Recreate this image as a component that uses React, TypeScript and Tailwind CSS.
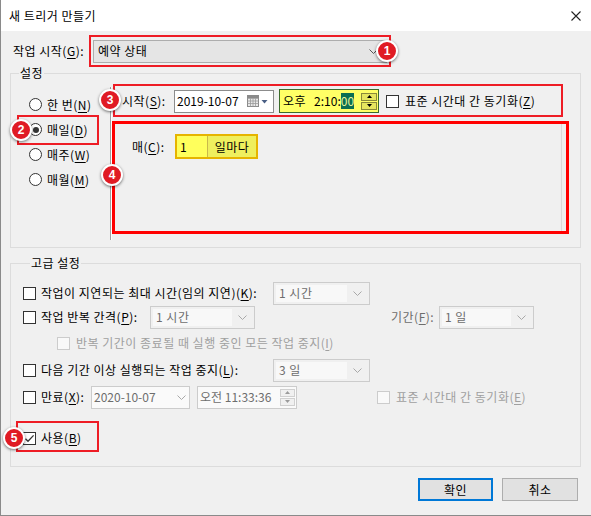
import React from "react";

function U({ children }: { children: React.ReactNode }) {
  return <span className="underline underline-offset-[2px] decoration-[1px]">{children}</span>;
}

function Check({ checked, disabled }: { checked?: boolean; disabled?: boolean }) {
  return (
    <span
      className={
        disabled
          ? "w-[13px] h-[13px] shrink-0 border border-[#cccccc] bg-[#f9f9f9] flex items-center justify-center"
          : "w-[13px] h-[13px] shrink-0 border border-[#333333] bg-white flex items-center justify-center"
      }
    >
      {checked && (
        <svg width="11" height="11" viewBox="0 0 11 11">
          <path d="M1.5 5.8 L4 8.3 L9.6 2.4" fill="none" stroke="#333333" strokeWidth="1.3" />
        </svg>
      )}
    </span>
  );
}

function Radio({ checked }: { checked?: boolean }) {
  return (
    <span className="w-[13px] h-[13px] shrink-0 rounded-full border border-[#333333] bg-white flex items-center justify-center">
      {checked && <span className="w-[6px] h-[6px] rounded-full bg-[#333333]" />}
    </span>
  );
}

function Chevron({ color }: { color: string }) {
  return (
    <svg width="9" height="5" viewBox="0 0 9 5">
      <path d="M0.5 0.5 L4.5 4.5 L8.5 0.5" fill="none" stroke={color} strokeWidth="1" />
    </svg>
  );
}

function Drop({ text, className }: { text: string; className: string }) {
  return (
    <div className={`h-[23px] border border-[#cccccc] bg-[#f0f0f0] flex items-center p-[2px] shrink-0 ${className}`}>
      <div className="flex-1 h-full bg-[#f8f8f8] flex items-center pl-[3px] text-[#6d6d6d]">{text}</div>
      <div className="w-[20px] h-full flex items-center justify-center">
        <Chevron color="#a8a8a8" />
      </div>
    </div>
  );
}

function Badge({ n, className }: { n: string; className: string }) {
  return (
    <div
      className={`absolute w-[22px] h-[22px] rounded-full bg-[#e01b24] border-2 border-white shadow-[0_1px_3px_rgba(0,0,0,0.55)] flex items-center justify-center text-white text-[12px] font-bold font-['Liberation_Sans',sans-serif] leading-none tracking-normal ${className}`}
    >
      {n}
    </div>
  );
}

export default function App() {
  return (
    <div className="relative w-[591px] h-[516px] overflow-hidden bg-[#f0f0f0] border-l border-b border-[#8a8a8a] text-[12px] leading-[16px] tracking-[0.5px] text-black font-['Noto_Sans_CJK_KR','Noto_Sans',sans-serif]">
      {/* Title bar */}
      <div className="h-[31px] bg-white flex items-center justify-between pl-[8px] pr-[10px]">
        <span>새 트리거 만들기</span>
        <svg width="10" height="10" viewBox="0 0 10 10">
          <path d="M0.5 0.5 L9.5 9.5 M9.5 0.5 L0.5 9.5" stroke="#222" strokeWidth="1.1" />
        </svg>
      </div>

      {/* Row 1 */}
      <div className="h-[32px] mt-[4px] flex items-center">
        <div className="w-[88px] pl-[12px]">
          작업 시작(<U>G</U>):
        </div>
        <div className="w-[301px] h-[32px] flex items-center pl-[4px] pr-[3px]">
          <div className="w-full h-[23px] bg-[#e5e5e5] border border-[#adadad] flex items-center justify-between pl-[4px] pr-[8px]">
            <span>예약 상태</span>
            <Chevron color="#555555" />
          </div>
        </div>
      </div>

      {/* 설정 */}
      <fieldset className="ml-[9px] w-[571px] border border-[#dcdcdc] pb-[7px]">
        <legend className="ml-[8px] px-[1px] leading-[12px]">설정</legend>
        <div className="flex">
          <div className="w-[99px] pt-[13px] pl-[18px] flex flex-col">
            <div className="h-[25px] flex items-center gap-[5px]">
              <Radio />
              <span>
                한 번(<U>N</U>)
              </span>
            </div>
            <div className="h-[25px] flex items-center gap-[5px]">
              <Radio checked />
              <span>
                매일(<U>D</U>)
              </span>
            </div>
            <div className="h-[25px] flex items-center gap-[5px]">
              <Radio />
              <span>
                매주(<U>W</U>)
              </span>
            </div>
            <div className="h-[25px] flex items-center gap-[5px]">
              <Radio />
              <span>
                매월(<U>M</U>)
              </span>
            </div>
          </div>
          <div className="mt-[8px] h-[153px] w-[2px] border-l border-[#a0a0a0] border-r border-r-white" />
          <div className="flex flex-col pt-[9px]">
            <div className="h-[26px] flex items-center pl-[10px]">
              <span className="w-[52px]">
                시작(<U>S</U>):
              </span>
              <div className="w-[100px] h-[23px] bg-white border border-[#8c8c8c] flex items-center justify-between pl-[2px] pr-[5px]">
                <span className="tracking-normal">2019-10-07</span>
                <svg width="21" height="12" viewBox="0 0 21 12">
                  <rect x="0.5" y="0.5" width="11" height="11" fill="#e8e8e8" stroke="#8a8a8a" />
                  <path d="M0.5 3.5 H11.5 M0.5 6 H11.5 M0.5 8.5 H11.5 M3.5 3.5 V11.5 M6 3.5 V11.5 M8.5 3.5 V11.5" stroke="#9a9a9a" strokeWidth="0.8" />
                  <rect x="0.5" y="0.5" width="11" height="2.5" fill="#8a8a8a" />
                  <path d="M14.5 5 L20.5 5 L17.5 8.5 Z" fill="#4a5f85" />
                </svg>
              </div>
              <div className="ml-[5px] w-[100px] h-[24px] bg-[#ffff66] border border-[#3b6b2a] flex items-center pl-[3px] pr-[1px]">
                <span>오후</span>
                <span className="ml-[8px] tracking-normal">2:10:</span>
                <span className="bg-[#0b6e52] text-[#e8f59a] tracking-normal">00</span>
                <div className="ml-auto flex flex-col w-[16px] h-[17px]">
                  <div className="h-[8px] border border-[#8a8a3a] bg-[#e6e65e] flex items-center justify-center">
                    <svg width="5" height="3" viewBox="0 0 5 3">
                      <path d="M0 3 L2.5 0 L5 3 Z" fill="#000" />
                    </svg>
                  </div>
                  <div className="mt-[1px] h-[8px] border border-[#8a8a3a] bg-[#e6e65e] flex items-center justify-center">
                    <svg width="5" height="3" viewBox="0 0 5 3">
                      <path d="M0 0 L2.5 3 L5 0 Z" fill="#000" />
                    </svg>
                  </div>
                </div>
              </div>
              <span className="ml-[7px]">
                <Check />
              </span>
              <span className="ml-[6px]">
                표준 시간대 간 동기화(<U>Z</U>)
              </span>
            </div>
            <div className="mt-[8px] ml-[2px] w-[448px] h-[110px] border border-[#dadada] pt-[11px] pl-[17px]">
              <div className="h-[25px] flex items-center">
                <span className="w-[43px]">
                  매(<U>C</U>):
                </span>
                <div className="w-[83px] h-[25px] border-2 border-[#e6b400] flex">
                  <div className="w-[31px] h-full bg-[#ffff5c] border-r border-[#c9b94a] flex items-center pl-[3px]">1</div>
                  <div className="flex-1 h-full bg-[#efef5e] flex items-center justify-center">일마다</div>
                </div>
              </div>
            </div>
          </div>
        </div>
      </fieldset>

      {/* 고급 설정 */}
      <fieldset className="ml-[9px] mt-[9px] w-[571px] border border-[#dcdcdc] pt-[12px] pb-[16px] pl-[12px]">
        <legend className="ml-[7px] px-[1px] leading-[12px]">고급 설정</legend>
        <div className="h-[24px] flex items-center">
          <div className="w-[250px] flex items-center gap-[5px]">
            <Check />
            <span>
              작업이 지연되는 최대 시간(임의 지연)(<U>K</U>):
            </span>
          </div>
          <Drop text="1 시간" className="w-[97px]" />
        </div>
        <div className="h-[24px] flex items-center">
          <div className="w-[127px] flex items-center gap-[5px]">
            <Check />
            <span>
              작업 반복 간격(<U>P</U>):
            </span>
          </div>
          <Drop text="1 시간" className="w-[105px]" />
          <span className="ml-[136px] w-[48px] text-[#6d6d6d]">
            기간(<U>F</U>):
          </span>
          <Drop text="1 일" className="w-[95px]" />
        </div>
        <div className="h-[28px] flex items-center pl-[34px] gap-[6px]">
          <Check disabled />
          <span className="text-[#a0a0a0]">
            반복 기간이 종료될 때 실행 중인 모든 작업 중지(<U>I</U>)
          </span>
        </div>
        <div className="mt-[1px] h-[24px] flex items-center">
          <div className="w-[250px] flex items-center gap-[5px]">
            <Check />
            <span>
              다음 기간 이상 실행되는 작업 중지(<U>L</U>):
            </span>
          </div>
          <Drop text="3 일" className="w-[97px]" />
        </div>
        <div className="mt-[3px] h-[24px] flex items-center">
          <div className="w-[68px] flex items-center gap-[5px]">
            <Check />
            <span>
              만료(<U>X</U>):
            </span>
          </div>
          <div className="w-[99px] h-[23px] bg-[#fafafa] border border-[#cccccc] flex items-center justify-between pl-[2px] pr-[3px] text-[#6d6d6d]">
            <span className="tracking-normal">2020-10-07</span>
            <Chevron color="#a8a8a8" />
          </div>
          <div className="ml-[7px] w-[100px] h-[23px] bg-[#fafafa] border border-[#cccccc] flex items-center pl-[2px] pr-[1px] text-[#6d6d6d]">
            <span className="tracking-normal">오전 11:33:36</span>
            <div className="ml-auto flex flex-col w-[15px] h-[17px]">
              <div className="h-[8px] border border-[#d0d0d0] bg-[#f0f0f0] flex items-center justify-center">
                <svg width="5" height="3" viewBox="0 0 5 3">
                  <path d="M0 3 L2.5 0 L5 3 Z" fill="#9a9a9a" />
                </svg>
              </div>
              <div className="mt-[1px] h-[8px] border border-[#d0d0d0] bg-[#f0f0f0] flex items-center justify-center">
                <svg width="5" height="3" viewBox="0 0 5 3">
                  <path d="M0 0 L2.5 3 L5 0 Z" fill="#9a9a9a" />
                </svg>
              </div>
            </div>
          </div>
          <span className="ml-[80px]">
            <Check disabled />
          </span>
          <span className="ml-[6px] text-[#a0a0a0]">
            표준 시간대 간 동기화(<U>E</U>)
          </span>
        </div>
        <div className="mt-[17px] h-[24px] flex items-center gap-[5px]">
          <Check checked />
          <span>
            사용(<U>B</U>)
          </span>
        </div>
      </fieldset>

      {/* Buttons */}
      <div className="mt-[11px] flex justify-end gap-[9px] pr-[13px]">
        <button className="w-[75px] h-[23px] bg-[#e1e1e1] border-2 border-[#0078d7] flex items-center justify-center">
          확인
        </button>
        <button className="w-[76px] h-[23px] bg-[#e1e1e1] border border-[#adadad] flex items-center justify-center">
          취소
        </button>
      </div>

      {/* Annotations */}
      <div className="absolute left-[88px] top-[35px] w-[302px] h-[32px] border-2 border-[#ee1c25]" />
      <div className="absolute left-[16px] top-[115px] w-[82px] h-[30px] border-2 border-[#ee1c25]" />
      <div className="absolute left-[112px] top-[84px] w-[450px] h-[33px] border-2 border-[#ee1c25]" />
      <div className="absolute left-[111px] top-[121px] w-[457px] h-[113px] border-[3px] border-[#ff0000]" />
      <div className="absolute left-[15px] top-[421px] w-[83px] h-[31px] border-2 border-[#ee1c25]" />
      <Badge n="1" className="left-[375px] top-[40px]" />
      <Badge n="2" className="left-[9px] top-[119px]" />
      <Badge n="3" className="left-[98px] top-[89px]" />
      <Badge n="4" className="left-[100px] top-[164px]" />
      <Badge n="5" className="left-[2px] top-[427px]" />
    </div>
  );
}
